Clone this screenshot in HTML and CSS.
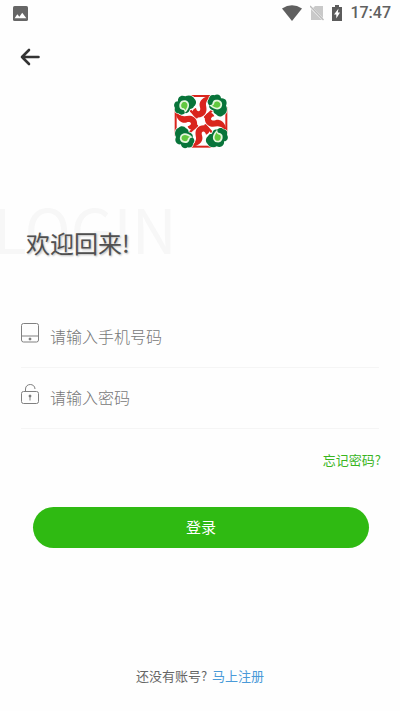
FILE: index.html
```html
<!DOCTYPE html>
<html lang="zh-CN">
<head>
<meta charset="utf-8">
<meta name="viewport" content="width=device-width, initial-scale=1">
<title>登录</title>
<link rel="stylesheet" href="styles.css">
</head>
<body>
<div class="status">
  <svg class="status-photo" width="15" height="15" viewBox="0 0 14 14" aria-hidden="true"><rect width="14" height="14" rx="1.5" fill="#666"/><path d="M1.500 11.500 4 7.800l2 2.200 2.600-3.800 3.900 5.300z" fill="#fff"/></svg>
  <div class="status-right">
    <svg width="20" height="16" viewBox="0 0 20 16" aria-hidden="true"><path d="M0 3.500Q10-3 20 3.500L10 16z" fill="#5f5f5f"/></svg>
    <svg width="14" height="16" viewBox="0 0 14 16" aria-hidden="true"><path d="M5 1h8v12L3 3zM1 4l11 11H1z" fill="#c9c9c9"/><path d="m0 1 13.500 14" stroke="#bbb" stroke-width="1.400"/></svg>
    <svg width="10" height="16" viewBox="0 0 10 16" aria-hidden="true"><path d="M3 0h4v2h3v14H0V2h3z" fill="#5b5b5b"/><path d="M6.500 3.500 2 9.500h2.300v4L8 7.500H5.800z" fill="#fff"/></svg>
    <span class="clock">17:47</span>
  </div>
</div>
<main>
  <button class="back" type="button" aria-label="返回">
    <svg width="20" height="18" viewBox="0 0 20 18" fill="none" stroke="#333" stroke-width="2.600" stroke-linecap="round" stroke-linejoin="round"><path d="M18.500 9H2M9 2 2 9l7 7"/></svg>
  </button>
  <svg class="logo" width="62" height="62" viewBox="0 0 186 186" role="img" aria-label="标志">
    <defs>
      <g id="swirl">
        <path d="M50 18H136" fill="none" stroke="#d9251d" stroke-width="6"/>
        <path d="M126 17C108 18 92 25 89 40c-2 9 4 14 1 21-3 6-11 2-12-7-8 2-14 11-9 20 7 12 27 11 36-1 7-10 4-20 3-28-1-11 7-19 18-28z" fill="#d9251d"/>
      </g>
      <g id="leaf">
        <path d="M15 54C9 45 14 34 24 34 22 21 34 13 46 19c10-6 24-2 27 7 8 7 6 18-1 23-2 6-7 8-12 8-2 9-8 14-15 12-7 7-15 6-19 1-8 0-14-7-11-16z" fill="#08743a" stroke="#fff" stroke-width="4" paint-order="stroke"/>
        <path d="M29 53c-4-14 5-25 17-22 12 3 14 16 8 26-3 6-6 9-10 12 0-5-1-8-4-9-5-1-9-3-11-7z" fill="#e4f6dc"/>
        <path d="M34 50c-2-9 4-16 11-14 8 2 9 11 5 18l-4 7c-1-5-4-6-7-7-3 0-4-2-5-4z" fill="#62c83f"/>
      </g>
      <path id="tendril" d="m58 58 22 24" stroke="#d9251d" stroke-width="7" stroke-linecap="round"/>
    </defs>
    <use href="#tendril"/><use href="#tendril" transform="rotate(90 93 94)"/><use href="#tendril" transform="rotate(180 93 94)"/><use href="#tendril" transform="rotate(270 93 94)"/>
    <use href="#leaf"/><use href="#leaf" transform="rotate(90 93 94)"/><use href="#leaf" transform="rotate(180 93 94)"/><use href="#leaf" transform="rotate(270 93 94)"/>
    <use href="#swirl"/><use href="#swirl" transform="rotate(90 93 94)"/><use href="#swirl" transform="rotate(180 93 94)"/><use href="#swirl" transform="rotate(270 93 94)"/>
    <use href="#leaf"/><use href="#leaf" transform="rotate(90 93 94)"/><use href="#leaf" transform="rotate(180 93 94)"/><use href="#leaf" transform="rotate(270 93 94)"/>
  </svg>
  <div class="welcome">
    <span class="ghost" aria-hidden="true">LOGIN</span>
    <h1>欢迎回来!</h1>
  </div>
  <form>
    <div class="field">
      <label for="phone" aria-label="手机号码"><svg width="18" height="20" viewBox="0 0 18 20" fill="none" stroke="#808080"><rect x=".5" y=".5" width="17" height="18.500" rx="2"/><path d="M.5 13h17"/><circle cx="9" cy="16" r="1" fill="#555"/></svg></label>
      <input id="phone" type="tel" placeholder="请输入手机号码">
    </div>
    <div class="field">
      <label for="password" aria-label="密码"><svg width="18" height="20" viewBox="0 0 18 20" fill="none" stroke="#808080"><rect x=".5" y="7.500" width="17" height="12" rx="2"/><path d="M4.500 7.500V5C4.500-1 14-1 14 5M9 12v4.500"/><circle cx="9" cy="12" r="1" fill="#555"/></svg></label>
      <input id="password" type="password" placeholder="请输入密码">
    </div>
    <a class="forgot" href="#forgot">忘记密码?</a>
    <button class="submit" type="submit">登录</button>
  </form>
  <p class="signup">还没有账号? <a href="#register">马上注册</a></p>
</main>
</body>
</html>
```
FILE: styles.css
```css
* { box-sizing: border-box; }
body {
  margin: 0;
  min-height: 100vh;
  display: flex;
  flex-direction: column;
  background: #fefefe;
  color: #666;
  font-family: "Noto Sans CJK SC", sans-serif;
}
a { text-decoration: none; }
svg { display: block; }
.status {
  display: flex;
  justify-content: space-between;
  align-items: center;
  height: 26px;
  padding: 0 9px 0 13px;
}
.status-right { display: flex; align-items: center; gap: 8px; }
.clock {
  font: 500 16px/20px Roboto, sans-serif;
  color: #606060;
}
main {
  flex: 1;
  display: flex;
  flex-direction: column;
}
.back {
  align-self: flex-start;
  margin: 16px 0 0 14px;
  padding: 6px;
  border: 0;
  background: none;
}
.logo { align-self: center; margin: 18px 0 0 2px; }
.welcome {
  position: relative;
  margin-top: 45px;
  padding: 28px 26px 0;
}
.ghost {
  position: absolute;
  top: -10px;
  left: -7px;
  font-size: 62px;
  line-height: 80px;
  color: #f7f7f7;
}
h1 {
  position: relative;
  margin: 0;
  font-size: 24px;
  line-height: 36px;
  font-weight: 400;
  color: #505050;
  text-shadow: 1px 1px 2px #bbb;
}
form {
  display: flex;
  flex-direction: column;
  margin-top: 46px;
  padding: 0 21px;
}
.field {
  display: flex;
  align-items: center;
  gap: 11px;
  height: 61px;
  border-bottom: 1px solid #f5f5f5;
}
.field label { margin-bottom: 8px; }
.field input {
  flex: 1;
  min-width: 0;
  margin-bottom: 2px;
  padding: 0;
  border: 0;
  outline: 0;
  background: none;
  font: 300 16px/24px "Noto Sans CJK SC", sans-serif;
  color: #555;
}
.field input::placeholder { color: #777; opacity: 1; }
.forgot {
  align-self: flex-end;
  margin: 20px -2px 0 0;
  font-size: 13px;
  line-height: 22px;
  color: #39b51e;
}
.submit {
  height: 41px;
  margin: 36px 10px 0 12px;
  padding: 0 0 2px;
  border: 0;
  border-radius: 21px;
  background: #2fba12;
  color: #fff;
  font: 15px/24px "Noto Sans CJK SC", sans-serif;
}
.signup {
  margin: auto 0 24px;
  text-align: center;
  font-size: 13px;
  line-height: 22px;
}
.signup a { margin-left: 2px; color: #4a9ad8; }
```
